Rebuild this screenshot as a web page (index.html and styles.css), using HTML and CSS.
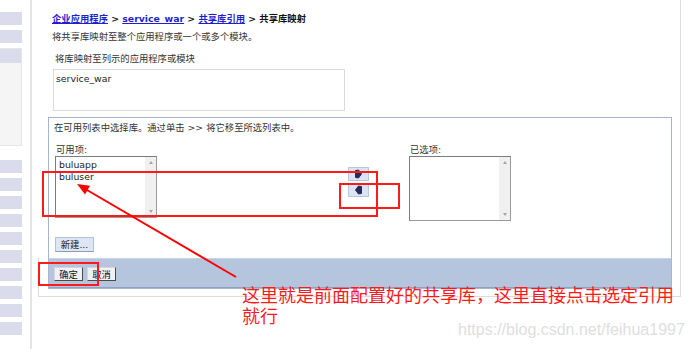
FILE: index.html
```html
<!DOCTYPE html>
<html lang="zh-CN">
<head>
    <meta charset="UTF-8">
    <title>共享库映射</title>
    <link rel="stylesheet" href="styles.css">
</head>
<body>

<div class="shell">
    <nav class="side">
        <div class="bar"></div>
        <div class="bar"></div>
        <div class="box"><div class="box-head"></div></div>
        <div class="bar"></div>
        <div class="bar"></div>
        <div class="bar"></div>
        <div class="bar"></div>
        <div class="bar"></div>
        <div class="bar"></div>
        <div class="bar"></div>
        <div class="bar"></div>
        <div class="bar"></div>
        <div class="bar"></div>
    </nav>
    <div class="rule"></div>

    <div class="page">
        <div class="crumbs">
            <a href="#">企业应用程序</a> &gt; <a href="#">service_war</a> &gt; <a href="#">共享库引用</a> &gt; 共享库映射
        </div>
        <p class="desc">将共享库映射至整个应用程序或一个或多个模块。</p>

        <div class="target-label">将库映射至列示的应用程序或模块</div>
        <div class="textbox">service_war</div>

        <div class="panel">
            <div class="panel-body">
                <p class="hint">在可用列表中选择库。通过单击 &gt;&gt; 将它移至所选列表中。</p>
                <div class="picker">
                    <div class="col col-left">
                        <div class="col-label">可用项:</div>
                        <div class="listbox">
                            <div class="items">
                                <div>buluapp</div>
                                <div>buluser</div>
                            </div>
                            <div class="scroll"><span class="up"></span><span class="down"></span></div>
                        </div>
                    </div>
                    <div class="moves">
                        <button class="move" type="button">
                            <svg width="9" height="10" viewBox="0 0 9 10"><polygon points="1.5,1.5 4.5,1 7.5,5 4.5,9 1.5,8.5" fill="#2a2a58" stroke="#2a2a58" stroke-linejoin="round"/></svg>
                        </button>
                        <button class="move" type="button">
                            <svg width="9" height="10" viewBox="0 0 9 10"><polygon points="7.5,1.5 4.5,1 1.5,5 4.5,9 7.5,8.5" fill="#2a2a58" stroke="#2a2a58" stroke-linejoin="round"/></svg>
                        </button>
                    </div>
                    <div class="col col-right">
                        <div class="col-label">已选项:</div>
                        <div class="listbox tall">
                            <div class="items"></div>
                            <div class="scroll"><span class="up"></span><span class="down"></span></div>
                        </div>
                    </div>
                </div>
                <button class="btn-new" type="button">新建...</button>
            </div>
            <div class="panel-foot">
                <button class="btn" type="button">确定</button>
                <button class="btn" type="button">取消</button>
            </div>
        </div>
    </div>
</div>

<!-- annotations drawn over the screenshot -->
<div class="mark mark-list"></div>
<div class="mark mark-move"></div>
<div class="mark mark-ok"></div>
<svg class="arrow" width="692" height="349" viewBox="0 0 692 349">
    <line x1="236" y1="277" x2="87" y2="190" stroke="#ff0000" stroke-width="2"/>
    <polygon points="77,184 90,185.8 85,194.4" fill="#ff0000"/>
</svg>
<div class="note">
    <div>这里就是前面配置好的共享库，这里直接点击选定引用</div>
    <div>就行</div>
</div>
<div class="watermark">https://blog.csdn.net/feihua1997</div>

</body>
</html>
```

FILE: styles.css
```css
* {
  box-sizing: border-box;
  margin: 0;
  padding: 0;
}

html, body {
  width: 100%;
  height: 100%;
  background: white;
  font-family: "DejaVu Sans", "Noto Sans CJK SC", sans-serif;
  font-size: 9.33px;
  color: #333;
  overflow: hidden;
}

.shell {
  display: flex;
  height: 100%;
}

/* left navigation strip */
.side {
  width: 22px;
  padding-top: 12px;
  display: flex;
  flex-direction: column;
}

.bar {
  height: 13px;
  margin-bottom: 5px;
  background: #dadcec;
}

.box {
  height: 98px;
  margin-bottom: 14px;
  background: #f5f5f5;
  border: 1px solid #e6e6e6;
  border-left: none;
}

.box-head {
  height: 14px;
  background: #dadcec;
}

.rule {
  width: 2px;
  margin-left: 8px;
  background: #e4e4e4;
}

/* main page */
.page {
  width: 643px;
  height: 297px;
  margin-left: 6px;
  padding: 0 8px 8px 10px;
  border-right: 1px solid #dcdcdc;
  border-bottom: 1px solid #dcdcdc;
  /* the left edge of the frame only shows beside the footer band */
  background: linear-gradient(#dcdcdc, #dcdcdc) no-repeat left bottom / 1px 38px;
}

.crumbs {
  margin-top: 12px;
  padding-left: 4px;
  line-height: 14px;
  font-weight: bold;
  color: #111;
}

.crumbs a {
  color: #1f1fd0;
  text-decoration: underline;
}

.desc {
  margin-top: 4px;
  padding-left: 4px;
  line-height: 14px;
}

.target-label {
  margin-top: 8px;
  padding-left: 7px;
  line-height: 14px;
}

.textbox {
  width: 292px;
  height: 42px;
  margin: 3px 0 0 5px;
  padding: 2px 0 0 2px;
  border: 1px solid #dadada;
  line-height: 14px;
  color: #222;
}

.panel {
  margin-top: 6px;
  width: 624px;
  border: 1px solid #a6b6d0;
}

.panel-body {
  padding: 3px 5px 6px 5px;
}

.hint {
  line-height: 14px;
}

.picker {
  display: flex;
  margin-top: 9px;
}

.col-left {
  margin-left: 1px;
}

.col-label {
  line-height: 12px;
  padding-left: 1px;
}

.listbox {
  width: 102px;
  height: 62px;
  display: flex;
  border: 1px solid #7c7c7c;
  border-right-color: #9a9a9a;
  border-bottom-color: #9a9a9a;
  background: white;
}

.listbox.tall {
  height: 65px;
}

.items {
  flex: 1;
  padding: 2px 0 0 3px;
  line-height: 12px;
  color: #222;
}

.scroll {
  width: 11px;
  background: #f0f0f0;
  display: flex;
  flex-direction: column;
  justify-content: space-between;
  align-items: center;
  padding: 4px 0;
}

.up, .down {
  width: 0;
  height: 0;
  border-left: 2.5px solid transparent;
  border-right: 2.5px solid transparent;
}

.up {
  border-bottom: 3px solid #a6a6a6;
}

.down {
  border-top: 3px solid #a6a6a6;
}

.moves {
  margin: 23px 0 0 191px;
  display: flex;
  flex-direction: column;
  gap: 2px;
}

.move {
  width: 21px;
  height: 14px;
  display: flex;
  align-items: center;
  justify-content: center;
  background: #dbe4f3;
  border: 1px solid #b9c7de;
}

.col-right {
  margin-left: 40px;
}

.btn-new {
  margin: 16px 0 0 1px;
  width: 39px;
  height: 15px;
  font: inherit;
  color: #222;
  line-height: 12px;
  background: #dde6f5;
  border: 1px solid #b3c2dc;
  border-bottom-color: #8d9cb8;
}

.panel-foot {
  height: 30px;
  padding: 8px 0 0 5px;
  display: flex;
  gap: 4px;
  align-items: flex-start;
  background: #b5c5dd;
  border-top: 1px solid #c9d5e7;
  border-bottom: 1px solid #8fa2c2;
}

.btn {
  width: 29px;
  height: 14px;
  font: inherit;
  color: #111;
  line-height: 11px;
  background: #eff1f6;
  border: 1px solid;
  border-color: #d6d6d6 #4a4a4a #4a4a4a #d6d6d6;
}

/* red annotations */
.mark {
  position: absolute;
  border: 2px solid #ff1a1a;
}

.mark-list {
  left: 42px;
  top: 171px;
  width: 336px;
  height: 46px;
}

.mark-move {
  left: 339px;
  top: 183px;
  width: 61px;
  height: 26px;
}

.mark-ok {
  left: 38px;
  top: 262px;
  width: 61px;
  height: 24px;
}

.arrow {
  position: absolute;
  left: 0;
  top: 0;
}

.note {
  position: absolute;
  left: 242px;
  top: 284px;
  font-family: "Noto Sans CJK SC", sans-serif;
  font-size: 18px;
  color: #ff1a1a;
  white-space: nowrap;
}

.note div {
  height: 21px;
  line-height: 21px;
}

.watermark {
  position: absolute;
  left: 458px;
  top: 321px;
  font-family: "Liberation Sans", Arial, sans-serif;
  font-size: 16px;
  line-height: 18px;
  color: #dedede;
}
```
